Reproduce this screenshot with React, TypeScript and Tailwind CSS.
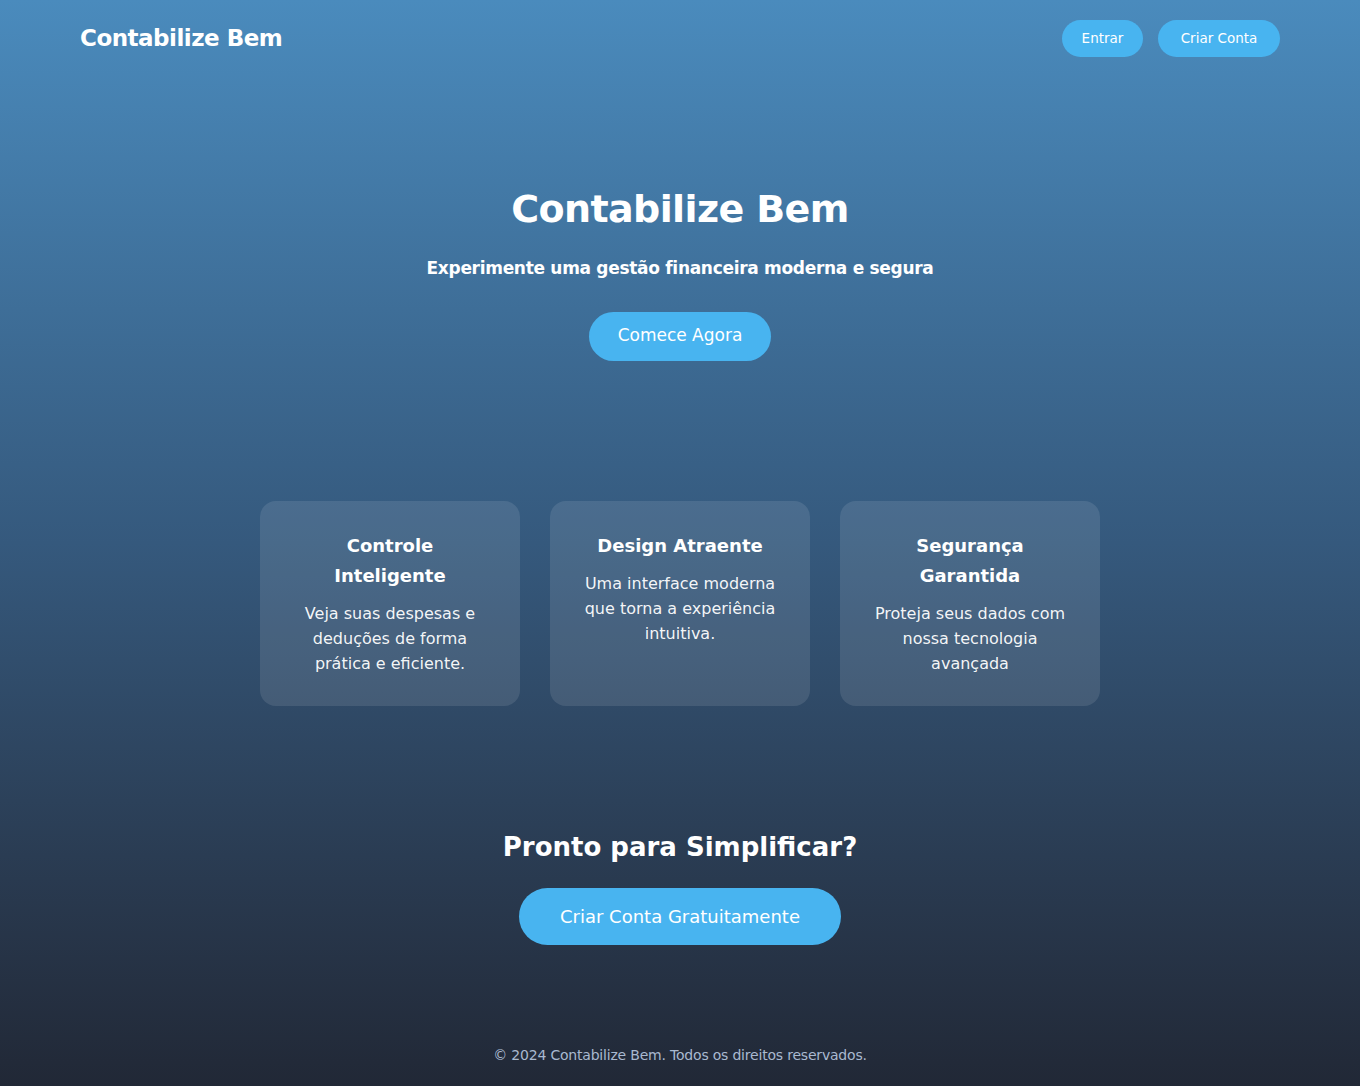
const cards = [
  {
    title: "Controle Inteligente",
    text: "Veja suas despesas e deduções de forma prática e eficiente.",
  },
  {
    title: "Design Atraente",
    text: "Uma interface moderna que torna a experiência intuitiva.",
  },
  {
    title: "Segurança Garantida",
    text: "Proteja seus dados com nossa tecnologia avançada",
  },
];

export default function App() {
  return (
    <div className="min-h-[1086px] flex flex-col bg-gradient-to-b from-[#4a8bbd] via-[#35597d] to-[#212836] text-white font-['DejaVu_Sans',sans-serif]">
      <header className="flex items-center justify-between px-20 h-[77px]">
        <h1 className="text-[23px] font-bold tracking-[-0.5px]">Contabilize Bem</h1>
        <nav className="flex gap-[15px]">
          <button className="h-[37px] w-[81px] rounded-full bg-[#48b4f0] text-[13.5px]">Entrar</button>
          <button className="h-[37px] w-[122px] rounded-full bg-[#48b4f0] text-[13.5px]">Criar Conta</button>
        </nav>
      </header>

      <section className="flex flex-col items-center pt-[104px]">
        <h2 className="text-[38px] font-bold leading-[56px] tracking-[-0.6px]">Contabilize Bem</h2>
        <p className="mt-[19px] text-[17px] font-bold tracking-[-0.3px]">
          Experimente uma gestão financeira moderna e segura
        </p>
        <button className="mt-[30px] h-[49px] w-[182px] rounded-full bg-[#48b4f0] text-[17px]">
          Comece Agora
        </button>
      </section>

      <section className="flex justify-center gap-[30px] mt-[140px]">
        {cards.map((c) => (
          <div key={c.title} className="w-[260px] h-[205px] rounded-2xl bg-white/10 px-[30px] pt-[30px] text-center">
            <h3 className="text-[18px] font-bold leading-[30px]">{c.title}</h3>
            <p className="mt-[10px] text-[16px] leading-[25px] text-white/95">{c.text}</p>
          </div>
        ))}
      </section>

      <section className="flex flex-col items-center mt-[120px]">
        <h2 className="text-[26px] font-bold leading-[42px]">Pronto para Simplificar?</h2>
        <button className="mt-[20px] h-[57px] w-[322px] rounded-full bg-[#48b4f0] text-[18px]">
          Criar Conta Gratuitamente
        </button>
      </section>

      <footer className="mt-auto pb-[20px] text-center text-[14px] tracking-[-0.2px] text-[#a9b9d0]">
        © 2024 Contabilize Bem. Todos os direitos reservados.
      </footer>
    </div>
  );
}
